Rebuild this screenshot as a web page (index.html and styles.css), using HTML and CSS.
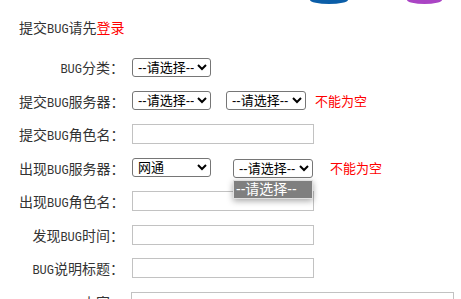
FILE: index.html
```html
<!DOCTYPE html>
<html lang="zh-CN">
<head>
  <meta charset="UTF-8">
  <title>提交BUG</title>
  <link rel="stylesheet" href="styles.css">
</head>
<body>

  <div class="top-icons">
    <span class="dot dot-blue"></span>
    <span class="dot dot-purple"></span>
  </div>

  <div class="page">
    <h2 class="titulo">提交<span class="en">BUG</span>请先<a href="#" class="login">登录</a></h2>

    <form class="formulario">
      <div class="row">
        <label class="lbl"><span class="en">BUG</span>分类：</label>
        <select class="sel"><option>--请选择--</option></select>
      </div>

      <div class="row">
        <label class="lbl">提交<span class="en">BUG</span>服务器：</label>
        <select class="sel"><option>--请选择--</option></select>
        <select class="sel sel-2"><option>--请选择--</option></select>
        <span class="error">不能为空</span>
      </div>

      <div class="row">
        <label class="lbl">提交<span class="en">BUG</span>角色名：</label>
        <input type="text" class="txt">
      </div>

      <div class="row">
        <label class="lbl">出现<span class="en">BUG</span>服务器：</label>
        <select class="sel"><option>网通</option></select>
        <div class="combo">
          <select class="sel"><option>--请选择--</option></select>
          <!-- lista abierta del select -->
          <div class="lista">--请选择--</div>
        </div>
        <span class="error error-2">不能为空</span>
      </div>

      <div class="row">
        <label class="lbl">出现<span class="en">BUG</span>角色名：</label>
        <input type="text" class="txt">
      </div>

      <div class="row">
        <label class="lbl">发现<span class="en">BUG</span>时间：</label>
        <input type="text" class="txt">
      </div>

      <div class="row">
        <label class="lbl"><span class="en">BUG</span>说明标题：</label>
        <input type="text" class="txt">
      </div>

      <div class="row row-top">
        <label class="lbl"><span class="en">BUG</span>内容：</label>
        <textarea class="area"></textarea>
      </div>
    </form>
  </div>

</body>
</html>
```

FILE: styles.css
```css
body {
  margin: 0;
  background: #fff;
  color: #333;
  font-family: "Noto Sans CJK SC", "Liberation Serif", serif;
  font-size: 14px;
  overflow: hidden;
}
.en {
  font-family: "Liberation Mono", monospace;
  font-size: 12px;
}
.top-icons {
  display: flex;
  height: 4px;
  padding-left: 310px;
  gap: 59px;
}
.dot {
  display: block;
  width: 38px;
  height: 4px;
  border-radius: 0 0 50% 50% / 0 0 100% 100%;
}
.dot-blue {
  background: #0b5ea8;
}
.dot-purple {
  width: 35px;
  background: #aa44c4;
}
.page {
  padding-left: 19px;
}
.titulo {
  margin: 12px 0 0;
  font-size: 14px;
  font-weight: normal;
  line-height: 22px;
}
.login {
  color: #f00;
  text-decoration: none;
}
.formulario {
  display: flex;
  flex-direction: column;
  gap: 13.5px;
  margin-top: 16px;
}
.row {
  display: flex;
  align-items: center;
  height: 20px;
}
.row-top {
  align-items: flex-start;
}
.lbl {
  width: 105px;
  margin-right: 8px;
  text-align: right;
  white-space: nowrap;
}
.row-top .lbl {
  margin-right: 7px;
}
.sel {
  box-sizing: border-box;
  width: 79px;
  height: 19px;
  padding: 0 0 0 1px;
  border: 1px solid #767676;
  border-radius: 3px;
  background: #fff;
  color: #000;
  font-family: "Liberation Sans", "Noto Sans CJK SC", sans-serif;
  font-size: 13px;
}
.sel-2 {
  width: 80px;
  margin-left: 15px;
}
.combo {
  position: relative;
  margin-left: 22px;
}
.combo .sel {
  width: 80px;
}
.lista {
  position: absolute;
  top: 23px;
  left: 0;
  width: 74px;
  padding: 0 2px;
  height: 17px;
  line-height: 17px;
  background: #7f7f7f;
  border: 1px solid #e0e0e0;
  color: #fff;
  font-family: "Liberation Sans", "Noto Sans CJK SC", sans-serif;
  font-size: 14px;
  box-shadow: 0 2px 6px rgba(0, 0, 0, 0.35);
}
.error {
  margin-left: 9px;
  color: #f00;
  font-family: "Liberation Sans", "Noto Sans CJK SC", sans-serif;
  font-size: 13px;
}
.error-2 {
  margin-left: 17px;
}
.txt {
  box-sizing: border-box;
  width: 182px;
  height: 20px;
  margin: 0;
  border: 1px solid #c2c2c2;
}
.area {
  box-sizing: border-box;
  width: 323px;
  height: 80px;
  margin: 0;
  border: 1px solid #c2c2c2;
  resize: none;
}
```
